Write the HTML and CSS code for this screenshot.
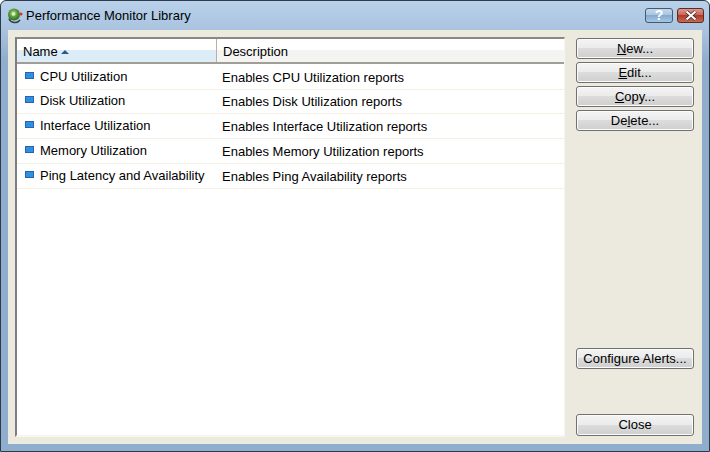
FILE: index.html
```html
<!DOCTYPE html>
<html lang="en">
<head>
<meta charset="utf-8">
<title>Performance Monitor Library</title>
<link rel="stylesheet" href="styles.css">
</head>
<body>
<div class="window">
  <div class="titlebar">
    <svg class="app-icon" width="18" height="18" viewBox="0 0 18 18">
      <defs><radialGradient id="g" cx="0.45" cy="0.4" r="0.65"><stop offset="0" stop-color="#c8e8a0"/><stop offset="0.45" stop-color="#5f9f3c"/><stop offset="1" stop-color="#2d5f22"/></radialGradient></defs>
      <path d="M3 11.500c1.500 4.500 8 5.500 11 1.500" fill="none" stroke="#30403a" stroke-width="1.500"/>
      <circle cx="8" cy="7.500" r="6" fill="url(#g)"/>
      <circle cx="7.500" cy="7" r="1.800" fill="#dff0c8"/>
      <circle cx="15" cy="7" r="1.500" fill="#d83030"/>
    </svg>
    <span class="title">Performance Monitor Library</span>
    <div class="caption-btns">
      <div class="cap cap-help">?</div>
      <div class="cap cap-close">
        <svg width="16" height="11" viewBox="0 0 16 11"><path d="M3.500 1.500l9 8M12.500 1.500l-9 8" stroke="#3a2020" stroke-width="3.600" fill="none"/><path d="M3.500 1.500l9 8M12.500 1.500l-9 8" stroke="#fff" stroke-width="2.200" fill="none"/></svg>
      </div>
    </div>
  </div>
  <div class="client">
    <div class="list">
      <div class="head">
        <div class="hcell hname">Name <span class="sort"></span></div>
        <div class="hcell hdesc">Description</div>
      </div>
      <div class="row"><div class="cname"><span class="bullet"></span>CPU Utilization</div><div class="cdesc">Enables CPU Utilization reports</div></div>
      <div class="row row-short"><div class="cname"><span class="bullet"></span>Disk Utilization</div><div class="cdesc">Enables Disk Utilization reports</div></div>
      <div class="row"><div class="cname"><span class="bullet"></span>Interface Utilization</div><div class="cdesc">Enables Interface Utilization reports</div></div>
      <div class="row"><div class="cname"><span class="bullet"></span>Memory Utilization</div><div class="cdesc">Enables Memory Utilization reports</div></div>
      <div class="row"><div class="cname"><span class="bullet"></span>Ping Latency and Availability</div><div class="cdesc">Enables Ping Availability reports</div></div>
    </div>
    <div class="side">
      <div class="btn-group">
        <button class="btn"><u>N</u>ew...</button>
        <button class="btn"><u>E</u>dit...</button>
        <button class="btn"><u>C</u>opy...</button>
        <button class="btn">De<u>l</u>ete...</button>
      </div>
      <button class="btn btn-alerts">Configure Alerts...</button>
      <button class="btn btn-close">Close</button>
    </div>
  </div>
</div>
</body>
</html>
```
FILE: styles.css
```css
html, body { margin: 0; padding: 0; }
body { width: 710px; height: 452px; overflow: hidden; font-family: "Liberation Sans", Arial, sans-serif; font-size: 13px; color: #000; }
.window {
  box-sizing: border-box; width: 710px; height: 452px;
  display: flex; flex-direction: column;
  background: linear-gradient(180deg, #b9d1ea 0, #a9c3df 30px, #8fadcc 60px, #8fadcc 100%);
  border: 1px solid #2c3a4a; border-radius: 6px 6px 0 0;
  padding: 0 7px 7px 7px;
}
.titlebar { height: 29px; display: flex; align-items: center; flex: none; }
.app-icon { margin-left: -2px; margin-right: 2px; flex: none; }
.title { font-size: 13px; color: #000; }
.caption-btns { margin-left: auto; margin-right: -2px; display: flex; gap: 4px; }
.cap { box-sizing: border-box; height: 15px; border: 1px solid #44586e; border-radius: 3px; display: flex; align-items: center; justify-content: center; overflow: hidden; }
.cap-help { width: 28px; background: linear-gradient(180deg, #c2d7ec 0, #a8c5e2 45%, #86a9cf 50%, #a6c6e4 100%); color: #fff; font-weight: bold; font-size: 14px; line-height: 13px; }
.cap-close { width: 27px; border-color: #5a2a24; background: linear-gradient(180deg, #dd9a8c 0, #c9665a 45%, #b03a2a 50%, #c96a50 100%); }
.client { flex: 1; background: #ece9df; display: flex; padding: 7px 8px 7px 7px; gap: 11px; min-height: 0; }
.list { box-sizing: border-box; width: 550px; background: #fff; border-left: 2px solid #7d7d7d; border-top: 2px solid #8a8880; border-right: 1px solid #f6f5f0; border-bottom: 2px solid #f6f5f0; }
.head { display: flex; height: 25px; box-sizing: border-box; border-bottom: 2px solid #a09e96; margin-bottom: 1px; }
.hcell { box-sizing: border-box; line-height: 26px; padding-left: 6px; white-space: nowrap; }
.hname { width: 200px; border-right: 1px solid #b5b2a6; background: linear-gradient(180deg, #fff 0, #fff 11px, #dcedf7 11px, #dcedf7 100%); }
.hdesc { flex: 1; background: linear-gradient(180deg, #fff 0, #fff 11px, #f4f4f2 11px, #f4f4f2 100%); }
.sort { display: inline-block; width: 0; height: 0; border-left: 4px solid transparent; border-right: 4px solid transparent; border-bottom: 4px solid #2f5a86; margin-left: 0; vertical-align: 2px; }
.row { display: flex; box-sizing: border-box; height: 25px; border-bottom: 1px solid #f3f1e4; align-items: center; white-space: nowrap; }
.row-short { height: 24px; }
.cname { width: 205px; display: flex; align-items: center; padding-left: 8px; box-sizing: border-box; margin-top: -2px; }
.bullet { box-sizing: border-box; width: 9px; height: 7px; background: #2f8fe0; border: 1px solid #2a62ae; margin-right: 6px; flex: none; margin-top: -2px; }
.side { width: 118px; display: flex; flex-direction: column; padding: 1px 0 1px; }
.btn-group { display: flex; flex-direction: column; gap: 3px; }
.btn {
  box-sizing: border-box; width: 118px; height: 21px; padding: 0 0 1px;
  font-family: "Liberation Sans", Arial, sans-serif; font-size: 13px; color: #000;
  border: 1px solid #707070; border-radius: 3px;
  background: linear-gradient(180deg, #f4f4f4 0, #ebebeb 48%, #dcdcdc 50%, #cfcfcf 100%);
  box-shadow: inset 0 0 0 1px #fbfbfb;
}
.btn-alerts { margin-top: auto; }
.btn-close { margin-top: 45px; height: 22px; padding-bottom: 2px; }
```
